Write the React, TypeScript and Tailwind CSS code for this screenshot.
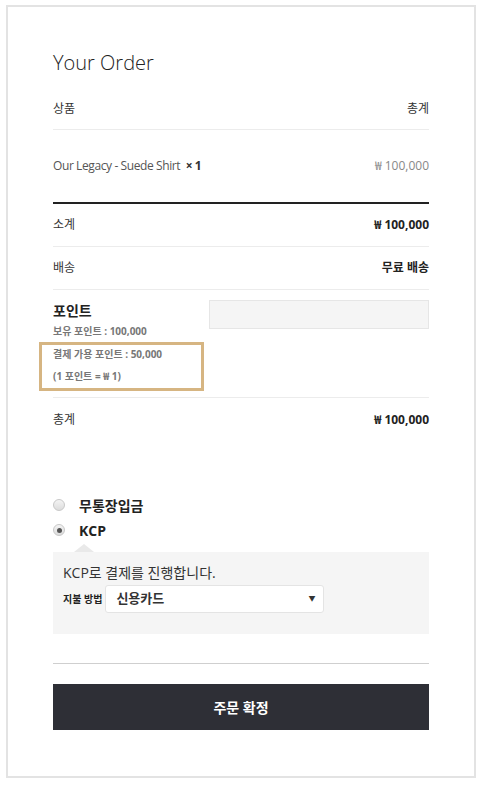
import React from 'react';

const font = { fontFamily: "'Open Sans', 'Noto Sans CJK KR', sans-serif" };

const Row = ({ label, value, bold, pt = 'pt-[13px]', pb = 'pb-[13px]', border = 'border-b border-[#ececec]' }: {
  label: React.ReactNode; value: React.ReactNode; bold?: boolean; pt?: string; pb?: string; border?: string;
}) => (
  <div className={`flex justify-between items-center ${pt} ${pb} ${border}`}>
    <span className="text-[12px] leading-[16px] text-[#333]">{label}</span>
    <span className={`text-[12px] leading-[16px] ${bold ? 'font-bold text-[#222]' : 'text-[#333]'}`}>{value}</span>
  </div>
);

const Radio = ({ checked }: { checked?: boolean }) => (
  <span className="w-[12px] h-[12px] rounded-full border border-[#c8c8c8] bg-gradient-to-b from-[#f4f4f4] to-[#dcdcdc] flex items-center justify-center shrink-0">
    {checked && <span className="w-[5px] h-[5px] rounded-full bg-[#555]" />}
  </span>
);

export default function App() {
  return (
    <div className="w-[484px] min-h-[786px] bg-white pt-[5px]" style={font}>
      <div className="ml-[6px] w-[470px] h-[773px] border-2 border-[#e3e3e3] px-[45px] pt-[42px]">
        <h2 className="text-[20px] leading-[28px] font-light text-[#222]">Your Order</h2>

        <Row label="상품" value="총계" pt="pt-[24px]" pb="pb-[12px]" />

        <div className="flex justify-between items-center pt-[28px] pb-[28px] border-b-2 border-[#222]">
          <span className="text-[12px] leading-[16px] text-[#555] tracking-[-0.4px]">
            Our Legacy - Suede Shirt&nbsp; <strong className="font-bold text-[#333]">× 1</strong>
          </span>
          <span className="text-[12px] leading-[16px] text-[#888]">₩ 100,000</span>
        </div>

        <Row label="소계" value="₩ 100,000" bold />
        <Row label="배송" value="무료 배송" bold />

        <div className="flex justify-between border-b border-[#ececec] pb-[6px]">
          <div className="flex flex-col">
            <span className="pt-[11px] text-[14px] leading-[20px] font-bold text-[#222]">포인트</span>
            <span className="mt-[2px] text-[10px] leading-[16px] font-bold text-[#777]">보유 포인트 : 100,000</span>
            <div className="mt-[3px] -ml-[14px] w-[165px] border-[3px] border-[#d6b582] pl-[11px] pt-[1px] pb-[4px] flex flex-col gap-[6px]">
              <span className="text-[10px] leading-[16px] font-bold text-[#777]">결제 가용 포인트 : 50,000</span>
              <span className="text-[10px] leading-[16px] font-bold text-[#777]">(1 포인트 = ₩ 1)</span>
            </div>
          </div>
          <div className="mt-[10px] w-[220px] h-[29px] bg-[#f5f5f5] border border-[#e6e6e6]" />
        </div>

        <Row label="총계" value="₩ 100,000" bold pt="pt-[14px]" pb="pb-[12px]" border="" />

        <div className="mt-[57px] flex flex-col gap-[9px]">
          <label className="flex items-center gap-[14px] h-[16px]">
            <Radio />
            <span className="text-[14px] font-bold text-[#222]">무통장입금</span>
          </label>
          <label className="flex items-center gap-[14px] h-[16px]">
            <Radio checked />
            <span className="text-[14px] font-bold text-[#222]">KCP</span>
          </label>
        </div>

        <div className="mt-[6px]">
          <div className="ml-[21px] w-0 h-0 border-l-[10px] border-r-[10px] border-b-[8px] border-l-transparent border-r-transparent border-b-[#e9e9e9]" />
          <div className="bg-[#f5f5f5] pl-[10px] pt-[11px] pb-[21px]">
            <p className="text-[14px] leading-[20px] text-[#333]">KCP로 결제를 진행합니다.</p>
            <div className="mt-[2px] flex items-center gap-[3px]">
              <span className="text-[10px] font-bold text-[#222] whitespace-nowrap">지불 방법</span>
              <div className="w-[219px] h-[28px] bg-white border border-[#e4e4e4] rounded-[3px] flex items-center justify-between pl-[10px] pr-[8px]">
                <span className="text-[13px] font-bold text-[#333]">신용카드</span>
                <span className="text-[7px] text-[#333]">▼</span>
              </div>
            </div>
          </div>
        </div>

        <div className="mt-[29px] border-t border-[#cfcfcf]" />

        <button className="mt-[20px] w-full h-[46px] bg-[#2e2f36] text-white text-[14px] font-bold">주문 확정</button>
      </div>
    </div>
  );
}
